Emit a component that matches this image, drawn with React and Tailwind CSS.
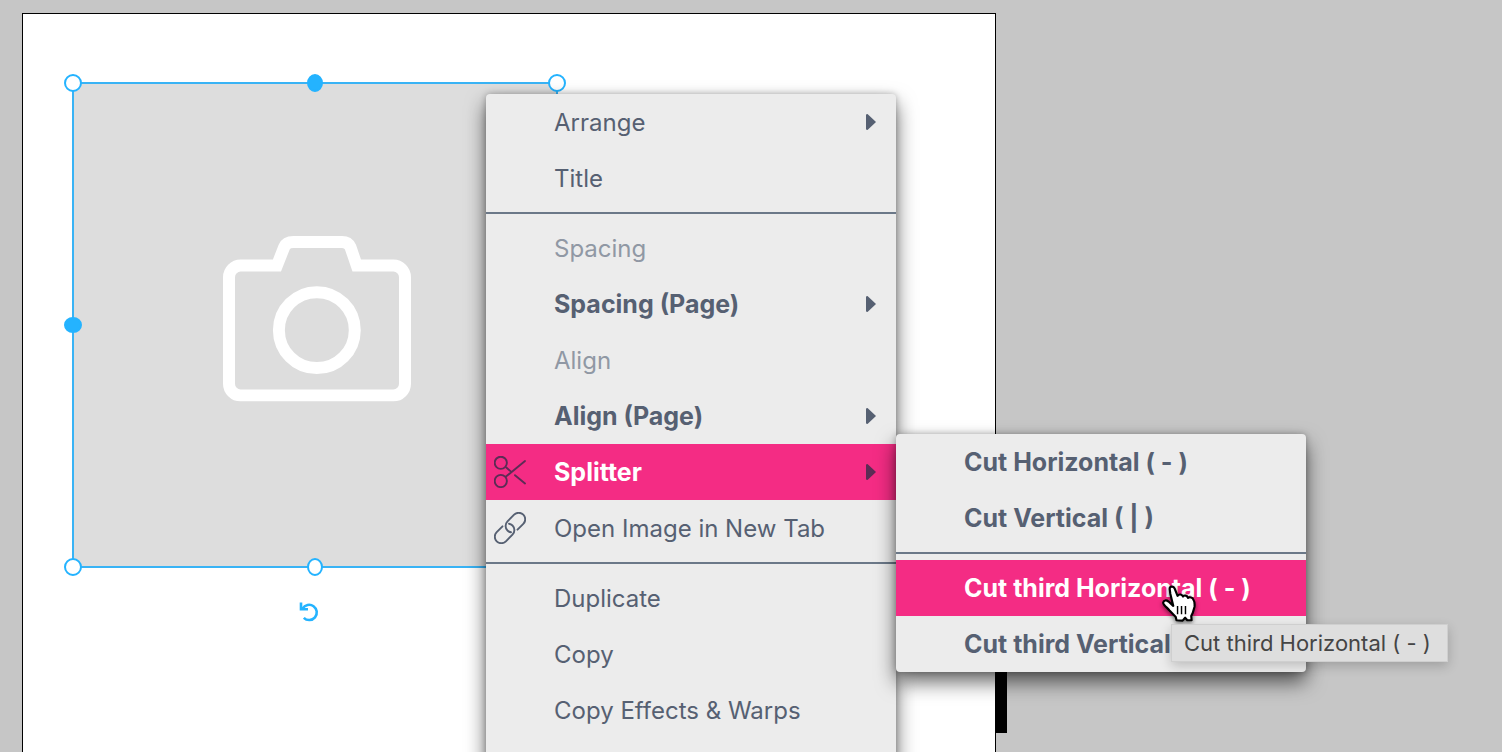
import clsx from 'clsx'

const menuItems = [
  { label: 'Arrange', submenu: true },
  { label: 'Title' },
  { divider: true },
  { label: 'Spacing', disabled: true },
  { label: 'Spacing (Page)', submenu: true, bold: true },
  { label: 'Align', disabled: true },
  { label: 'Align (Page)', submenu: true, bold: true },
  { label: 'Splitter', submenu: true, bold: true, active: true, icon: ScissorsIcon },
  { label: 'Open Image in New Tab', icon: LinkIcon },
  { divider: true },
  { label: 'Duplicate' },
  { label: 'Copy' },
  { label: 'Copy Effects & Warps' },
]

const splitterItems = [
  { label: 'Cut Horizontal ( - )', bold: true },
  { label: 'Cut Vertical ( | )', bold: true },
  { divider: true },
  { label: 'Cut third Horizontal ( - )', bold: true, active: true, hovered: true },
  { label: 'Cut third Vertical ( | )', bold: true },
]

function ScissorsIcon() {
  return (
    <svg viewBox="0 0 32 32" className="size-8" fill="none" stroke="currentColor" strokeWidth="1.9" strokeLinecap="round">
      <circle cx="6.8" cy="6.8" r="6.1" />
      <circle cx="6.8" cy="25" r="6.1" />
      <path d="M12.3 11.5l5 4.4M12 20.6L31 5M21 19.2l10 8.2" />
    </svg>
  )
}

function LinkIcon() {
  const half = 'M23.5 17.7L29.3 11.9A6.5 6.5 0 0 0 20.1 2.7L13.5 9.3A6.5 6.5 0 0 0 13.5 18.5Q15 20 17 20.3'
  return (
    <svg viewBox="0 0 32 32" className="size-8" fill="none" stroke="currentColor" strokeWidth="1.9" strokeLinecap="round">
      <path d={half} />
      <path d={half} transform="rotate(180 16 16)" />
    </svg>
  )
}

function CameraIcon() {
  return (
    <svg viewBox="0 0 565 497" className="w-[188px] text-white" fill="none" stroke="currentColor" strokeWidth="36">
      <path d="M53 89H162L184 33Q190 18 212 18H358Q376 18 383 33L402 89H512A35 35 0 0 1 547 124V444A35 35 0 0 1 512 479H53A35 35 0 0 1 18 444V124A35 35 0 0 1 53 89Z" />
      <circle cx="282" cy="283" r="114" />
    </svg>
  )
}

function RotateIcon() {
  return (
    <svg viewBox="0 0 20 20" className="size-5" fill="none" stroke="currentColor" strokeWidth="2.6">
      <path d="M3.6 6.6A7.6 7.6 0 1 1 4.8 15.8" />
      <path d="M2 .5V7.300H9" />
      <path d="M2 3.500L6 7.500H2Z" fill="currentColor" stroke="none" />
    </svg>
  )
}

function HandCursor() {
  return (
    <svg viewBox="-3 -1 100 108" className="w-9 drop-shadow-[0_2px_2px_rgba(0,0,0,0.5)]" fill="white" stroke="black" strokeWidth="6" strokeLinejoin="round">
      <path d="M21 10C21 2 32 1 35 9L43 29C47 23 56 25 58 31C62 26 70 28 72 35C77 31 85 34 87 40C91 46 91 52 90 60L85 77L81 85L82 97H70L64 90L57 98L40 97L38 88L20 69C13 61 3 54 3 48C4 41 12 40 18 45L31 57L23 24Z" />
      <path d="M43 57V80M54 57V80M65 57V80" strokeWidth="4" />
    </svg>
  )
}

function Handle({ className, filled }) {
  return (
    <span
      className={clsx(
        'absolute -translate-x-1/2 -translate-y-1/2 rounded-[50%] border-2 border-[#24b3ff]',
        filled ? 'bg-[#24b3ff]' : 'bg-white',
        className
      )}
    />
  )
}

function ImageFrame() {
  return (
    <div className="absolute top-[68px] left-[49px] flex size-[486px] items-center justify-center border-2 border-[#39b3f5] bg-[#dddddd] pb-3 pl-1">
      <CameraIcon />
      <div className="absolute -inset-px">
        <Handle className="top-0 left-0 size-[18px]" />
        <Handle className="top-0 left-1/2 h-[18px] w-4" filled />
        <Handle className="top-0 left-full size-[18px]" />
        <Handle className="top-1/2 left-0 h-4 w-[18px]" filled />
        <Handle className="top-full left-0 size-[18px]" />
        <Handle className="top-full left-1/2 h-[18px] w-4" />
      </div>
      <button aria-label="Rotate" className="absolute top-full left-1/2 mt-9 -ml-4 text-[#24b3ff]">
        <RotateIcon />
      </button>
    </div>
  )
}

function Tooltip({ children }) {
  return (
    <div role="tooltip" className="absolute top-16 left-[275px] z-20 border border-[#cfcfcf] bg-[#dedede] pr-4 pl-3 text-[22px] leading-9 font-normal whitespace-nowrap text-[#454545] shadow-[0_4px_12px_rgba(0,0,0,0.2)]">
      {children}
    </div>
  )
}

function MenuItem({ item }) {
  if (item.divider) return <li role="separator" className="my-1.5 h-0.5 bg-[#6b7888]" />

  const Icon = item.icon
  return (
    <li className="relative">
      <button
        disabled={item.disabled}
        className={clsx(
          'flex h-14 w-full items-center pr-5 pl-2 text-left',
          item.bold && 'text-[25px] font-bold',
          item.disabled && 'text-[#9098a4]',
          item.active && 'bg-[#f42c84] text-[#5c2c55]'
        )}
      >
        <span className="mr-7 w-8 shrink-0">{Icon && <Icon />}</span>
        <span className={clsx('grow pt-0.5 whitespace-nowrap', item.active && 'text-white')}>{item.label}</span>
        {item.submenu && (
          <svg viewBox="0 0 10 16" className="h-4 w-2.5" fill="currentColor">
            <path d="M0 1Q0 0 1.500 0L10 8L1.500 16Q0 16 0 15Z" />
          </svg>
        )}
      </button>
      {item.label === 'Splitter' && <Menu items={splitterItems} className="-top-2.5 left-full" />}
      {item.hovered && (
        <>
          <span className="pointer-events-none absolute top-[25px] left-[265px] z-10">
            <HandCursor />
          </span>
          <Tooltip>{item.label}</Tooltip>
        </>
      )}
    </li>
  )
}

function Menu({ items, className }) {
  return (
    <ul
      className={clsx(
        'absolute w-[410px] rounded-[4px] bg-[#ececec] text-2xl text-[#566072] shadow-[0_10px_20px_rgba(0,0,0,0.6),0_0_6px_rgba(0,0,0,0.25)]',
        className
      )}
    >
      {items.map((item, i) => <MenuItem key={i} item={item} />)}
    </ul>
  )
}

export default function App() {
  return (
    <main className="relative h-screen overflow-hidden bg-[#c6c6c6] pt-[13px] pl-[22px] font-[Inter,sans-serif]">
      {/* Page being edited */}
      <div className="flex h-full">
        <div className="relative h-full w-[974px] shrink-0 border border-b-0 border-black bg-white">
          <ImageFrame />
        </div>
        <div className="-ml-px h-[720px] w-3 bg-[linear-gradient(transparent_640px,black_640px)]" />
      </div>

      {/* Context menu */}
      <Menu items={menuItems} className="top-[94px] left-[486px] pb-14" />
    </main>
  )
}
